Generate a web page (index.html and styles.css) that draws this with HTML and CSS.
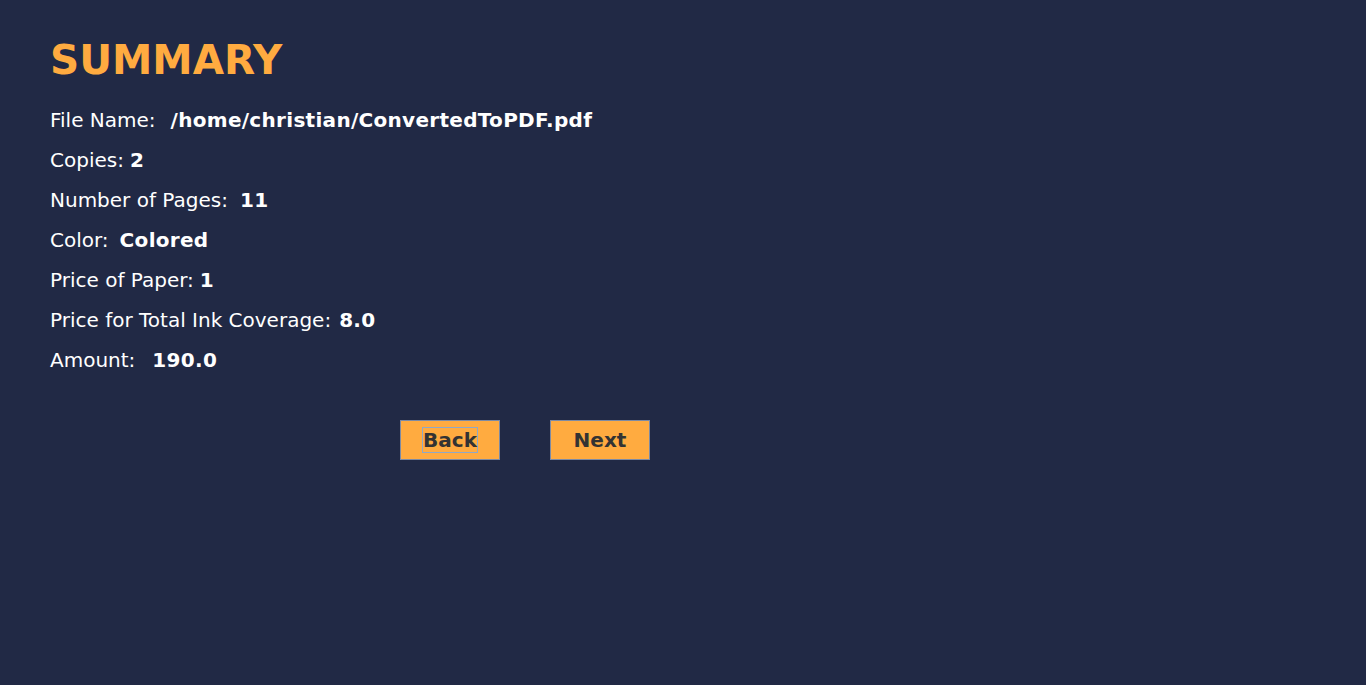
FILE: index.html
```html
<!DOCTYPE html>
<html>
<head>
<meta charset="utf-8">
<link rel="stylesheet" href="styles.css">
</head>
<body>
<main class="panel">
  <h1 class="title">SUMMARY</h1>
  <div class="rows">
    <div class="row"><span class="label">File Name:</span><span class="value gap-file">/home/christian/ConvertedToPDF.pdf</span></div>
    <div class="row"><span class="label">Copies:</span><span class="value gap-copies">2</span></div>
    <div class="row"><span class="label">Number of Pages:</span><span class="value gap-pages">11</span></div>
    <div class="row"><span class="label">Color:</span><span class="value gap-color">Colored</span></div>
    <div class="row"><span class="label">Price of Paper:</span><span class="value gap-paper">1</span></div>
    <div class="row"><span class="label">Price for Total Ink Coverage:</span><span class="value gap-ink">8.0</span></div>
    <div class="row"><span class="label">Amount:</span><span class="value gap-amount">190.0</span></div>
  </div>
  <div class="buttons">
    <button class="btn"><span class="focus">Back</span></button>
    <button class="btn">Next</button>
  </div>
</main>
</body>
</html>
```
FILE: styles.css
```css
html, body {
  margin: 0;
  padding: 0;
  background: #212945;
  height: 100%;
}
body {
  font-family: "DejaVu Sans", sans-serif;
  color: #ffffff;
}
.panel {
  padding: 36px 0 0 50px;
}
.title {
  margin: 0;
  font-size: 40.5px;
  line-height: 48px;
  font-weight: bold;
  color: #ffab40;
}
.rows {
  margin-top: 16px;
  display: flex;
  flex-direction: column;
}
.row {
  display: flex;
  align-items: baseline;
  height: 40px;
  line-height: 40px;
  font-size: 20px;
}
.value {
  font-weight: bold;
  letter-spacing: 0.3px;
}
.gap-file { margin-left: 15px; }
.gap-copies { margin-left: 6px; }
.gap-pages { margin-left: 12px; }
.gap-color { margin-left: 11px; }
.gap-paper { margin-left: 6px; }
.gap-ink { margin-left: 8px; }
.gap-amount { margin-left: 17px; }
.buttons {
  display: flex;
  gap: 50px;
  margin-top: 40px;
  margin-left: 350px;
}
.btn {
  width: 100px;
  height: 40px;
  background: #ffab40;
  border: 1px solid #7d8aa3;
  font-family: "DejaVu Sans", sans-serif;
  font-size: 20px;
  font-weight: bold;
  color: #333333;
  padding: 0;
  display: flex;
  align-items: center;
  justify-content: center;
}
.focus {
  border: 1px solid #8fa8c6;
  line-height: 24px;
  padding: 0;
}
```
